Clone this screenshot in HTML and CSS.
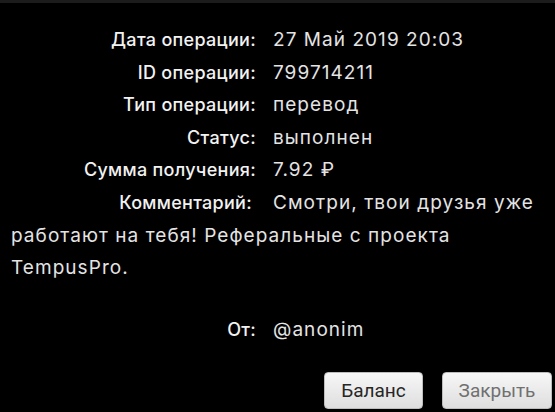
FILE: index.html
```html
<!DOCTYPE html>
<html lang="ru">
<head>
  <meta charset="UTF-8">
  <meta name="viewport" content="width=device-width, initial-scale=1.0">
  <title>Операция</title>
  <link rel="stylesheet" href="styles.css">
</head>
<body>
  <div class="topbar"></div>

  <div class="details">
    <div class="row"><span class="label">Дата операции:</span><span class="value">27 Май 2019 20:03</span></div>
    <div class="row"><span class="label">ID операции:</span><span class="value">799714211</span></div>
    <div class="row"><span class="label">Тип операции:</span><span class="value">перевод</span></div>
    <div class="row"><span class="label">Статус:</span><span class="value">выполнен</span></div>
    <div class="row"><span class="label">Сумма получения:</span><span class="value">7.92 ₽</span></div>
    <div class="row"><span class="label label-comment">Комментарий:</span><span class="value">Смотри, твои друзья уже работают на тебя! Реферальные с проекта TempusPro.</span></div>
    <div class="row spacer"></div>
    <div class="row"><span class="label">От:</span><span class="value">@anonim</span></div>
  </div>

  <div class="buttons">
    <button class="btn btn-balance">Баланс</button>
    <button class="btn btn-muted">Закрыть</button>
  </div>
</body>
</html>
```

FILE: styles.css
```css
body {
  margin: 0;
  background: #000;
  color: #e8e8e8;
  font-family: "Inter", "Open Sans", sans-serif;
  width: 555px;
  height: 412px;
  overflow: hidden;
}

.topbar {
  height: 3px;
  background: #1c1c1c;
}

.details {
  padding: 21px 0 0 11px;
  font-size: 19px;
  line-height: 32.6px;
}

.row.spacer {
  height: 29px;
}

.label {
  display: inline-block;
  width: 245px;
  margin-right: 17px;
  text-align: right;
  font-size: 18px;
  font-weight: 500;
  letter-spacing: 0.3px;
  color: #f2f2f2;
}
.label-comment {
  width: 241px;
  margin-right: 21px;
}

.value {
  font-weight: 400;
  letter-spacing: 1.05px;
  color: #e4e4e4;
}

.buttons {
  display: flex;
  justify-content: flex-end;
  gap: 19px;
  padding: 26px 3px 0 0;
}

.btn {
  box-sizing: border-box;
  height: 37px;
  padding: 0;
  border: 1px solid #bdbdbd;
  border-radius: 4px;
  background: linear-gradient(#f7f7f7, #dedede);
  font-family: "Roboto", sans-serif;
  font-size: 19px;
  color: #262626;
}
.btn-balance {
  width: 99px;
}
.btn-muted {
  width: 110px;
  color: #707070;
}
```
